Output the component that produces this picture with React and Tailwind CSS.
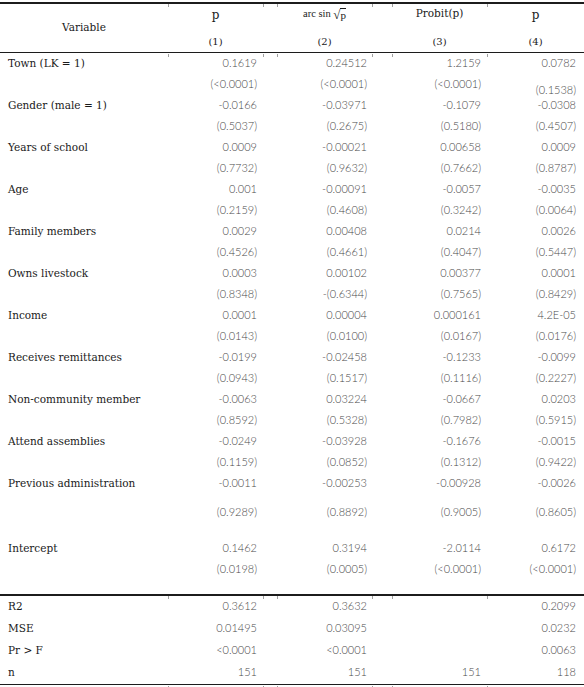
import React from "react";

const cols = "grid grid-cols-[168px_95px_109px_115px_97px]";
const labelFont = { fontFamily: '"DejaVu Serif", serif' };
const numFont = { fontFamily: 'Lato, "Liberation Sans", sans-serif' };

const body = [
  { label: "Town (LK = 1)", v: ["0.1619", "0.24512", "1.2159", "0.0782"] },
  { v: ["(<0.0001)", "(<0.0001)", "(<0.0001)", "(0.1538)"], drop4: true },
  { label: "Gender (male = 1)", v: ["-0.0166", "-0.03971", "-0.1079", "-0.0308"] },
  { v: ["(0.5037)", "(0.2675)", "(0.5180)", "(0.4507)"] },
  { label: "Years of school", v: ["0.0009", "-0.00021", "0.00658", "0.0009"] },
  { v: ["(0.7732)", "(0.9632)", "(0.7662)", "(0.8787)"] },
  { label: "Age", v: ["0.001", "-0.00091", "-0.0057", "-0.0035"] },
  { v: ["(0.2159)", "(0.4608)", "(0.3242)", "(0.0064)"] },
  { label: "Family members", v: ["0.0029", "0.00408", "0.0214", "0.0026"] },
  { v: ["(0.4526)", "(0.4661)", "(0.4047)", "(0.5447)"] },
  { label: "Owns livestock", v: ["0.0003", "0.00102", "0.00377", "0.0001"] },
  { v: ["(0.8348)", "-(0.6344)", "(0.7565)", "(0.8429)"] },
  { label: "Income", v: ["0.0001", "0.00004", "0.000161", "4.2E-05"] },
  { v: ["(0.0143)", "(0.0100)", "(0.0167)", "(0.0176)"] },
  { label: "Receives remittances", v: ["-0.0199", "-0.02458", "-0.1233", "-0.0099"] },
  { v: ["(0.0943)", "(0.1517)", "(0.1116)", "(0.2227)"] },
  { label: "Non-community member", v: ["-0.0063", "0.03224", "-0.0667", "0.0203"] },
  { v: ["(0.8592)", "(0.5328)", "(0.7982)", "(0.5915)"] },
  { label: "Attend assemblies", v: ["-0.0249", "-0.03928", "-0.1676", "-0.0015"] },
  { v: ["(0.1159)", "(0.0852)", "(0.1312)", "(0.9422)"] },
  { label: "Previous administration", v: ["-0.0011", "-0.00253", "-0.00928", "-0.0026"] },
  { v: ["(0.9289)", "(0.8892)", "(0.9005)", "(0.8605)"], pad: true },
];

const intercept = [
  { label: "Intercept", v: ["0.1462", "0.3194", "-2.0114", "0.6172"] },
  { v: ["(0.0198)", "(0.0005)", "(<0.0001)", "(<0.0001)"] },
];

const stats = [
  { label: "R2", v: ["0.3612", "0.3632", "", "0.2099"] },
  { label: "MSE", v: ["0.01495", "0.03095", "", "0.0232"] },
  { label: "Pr > F", v: ["<0.0001", "<0.0001", "", "0.0063"] },
  { label: "n", v: ["151", "151", "151", "118"] },
];

const pads = ["pr-[6px]", "pr-[5px]", "pr-[6px]", "pr-[8px]"];

// horizontal rule with the little column ticks seen in the scan
function Rule() {
  const ticks = [168, 263, 277, 372, 392, 487];
  return (
    <div className="relative h-[1.5px] bg-[#1c1c1c]">
      {ticks.map((x) => (
        <span
          key={x}
          className="absolute top-[2px] w-px h-[3px] bg-[#a0a0a0]"
          style={{ left: x }}
        />
      ))}
    </div>
  );
}

function Row({ r, h = "h-[21px]" }) {
  return (
    <div className={`${cols} ${h} items-center`}>
      <div className="pl-2 text-[10.5px] text-[#1a1a1a]" style={labelFont}>
        {r.label}
      </div>
      {r.v.map((val, i) => (
        <div
          key={i}
          className={`text-right text-[11px] font-light text-[#4a4a4a] ${pads[i]} ${
            r.drop4 && i === 3 ? "translate-y-[6px]" : ""
          }`}
          style={numFont}
        >
          {val}
        </div>
      ))}
    </div>
  );
}

export default function App() {
  return (
    <div className="w-[584px] h-[687px] bg-white pt-[2px] overflow-hidden">
      <Rule />
      {/* header */}
      <div className={`${cols} h-[48px]`} style={labelFont}>
        <div className="flex items-center justify-center text-[10.5px] text-[#1a1a1a]">
          Variable
        </div>
        <div className="flex flex-col items-center justify-between pt-[2px] pb-[3px] text-[#1a1a1a]">
          <span className="text-[12px]">p</span>
          <span className="text-[10px]">(1)</span>
        </div>
        <div className="flex flex-col items-center justify-between pt-[2px] pb-[3px] pl-[14px] text-[#1a1a1a]">
          <span
            className="text-[10.5px] flex items-end"
            style={{ fontFamily: '"Liberation Serif", serif' }}
          >
            arc sin&nbsp;
            <span className="text-[13px] leading-none">√</span>
            <span className="border-t border-[#1a1a1a] leading-[12px] text-[11px]">p</span>
          </span>
          <span className="text-[10px]">(2)</span>
        </div>
        <div className="flex flex-col items-center justify-between pt-[2px] pb-[3px] pl-[20px] text-[#1a1a1a]">
          <span className="text-[10.5px]">Probit(p)</span>
          <span className="text-[10px]">(3)</span>
        </div>
        <div className="flex flex-col items-center justify-between pt-[2px] pb-[3px] text-[#1a1a1a]">
          <span className="text-[12px]">p</span>
          <span className="text-[10px]">(4)</span>
        </div>
      </div>
      <Rule />
      {body.map((r, i) => (
        <Row key={i} r={r} h={r.pad ? "h-[29px] pt-[8px]" : "h-[21px]"} />
      ))}
      <div className="h-[15px]" />
      {intercept.map((r, i) => (
        <Row key={i} r={r} />
      ))}
      <div className="h-[14px]" />
      <Rule />
      {stats.map((r, i) => (
        <Row key={i} r={r} h="h-[22px]" />
      ))}
      <Rule />
    </div>
  );
}
